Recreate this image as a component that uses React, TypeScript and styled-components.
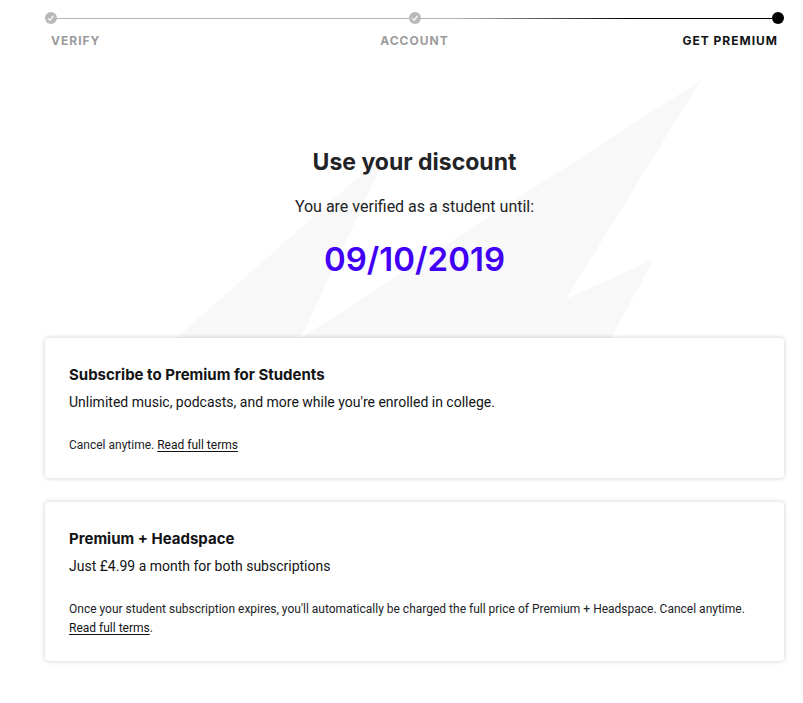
import React from 'react';
import styled, { createGlobalStyle } from 'styled-components';

const headingFont = 'Inter, "Liberation Sans", sans-serif';

const GlobalStyle = createGlobalStyle`
  * { box-sizing: border-box; }
  body {
    margin: 0;
    background: #fff;
    color: #121314;
    font-family: Roboto, "Liberation Sans", sans-serif;
  }
`;

const Page = styled.main`
  padding: 12px 19px 40px 45px;
`;

const Steps = styled.ol`
  display: grid;
  grid-template-columns: auto 1fr auto 1fr auto;
  align-items: center;
  margin: 0;
  padding: 0;
  list-style: none;
`;

const Marker = styled.svg`
  display: block;
  width: 12px;
  height: 12px;
`;

const Track = styled.li<{ $active?: boolean }>`
  height: 1px;
  background: ${p => (p.$active
    ? 'linear-gradient(to right, #b3b3b3 10%, #000 60%)'
    : '#b3b3b3')};
`;

const Labels = styled.div`
  display: grid;
  grid-template-columns: 1fr 1fr 1fr;
  margin-top: 8px;
  padding: 0 6px;
`;

const Label = styled.span<{ $align: 'left' | 'center' | 'right'; $current?: boolean }>`
  color: ${p => (p.$current ? '#121314' : '#9b9b9b')};
  font-family: ${headingFont};
  font-size: 12px;
  font-weight: 700;
  line-height: 18px;
  letter-spacing: 1px;
  text-align: ${p => p.$align};
  text-transform: uppercase;
`;

const Hero = styled.section`
  position: relative;
  display: grid;
  justify-items: center;
  padding: 94px 0 55px;
  text-align: center;
`;

const Backdrop = styled.svg`
  position: absolute;
  inset: 0;
  z-index: -1;
  width: 100%;
  height: 100%;
`;

const Title = styled.h1`
  margin: 0;
  color: #222326;
  font-family: ${headingFont};
  font-size: 23px;
  font-weight: 700;
  line-height: 36px;
`;

const Lead = styled.p`
  margin: 15px 0 0;
  color: #222326;
  font-size: 16px;
  line-height: 24px;
`;

const Expiry = styled.time`
  margin-top: 16px;
  color: #4100f5;
  font-family: ${headingFont};
  font-size: 33px;
  font-weight: 600;
  line-height: 48px;
`;

const Plans = styled.div`
  display: grid;
  gap: 24px;
`;

const Card = styled.article`
  padding: 24px 24px 23px;
  border-radius: 4px;
  background: #fff;
  box-shadow: 0 0 5px rgba(0, 0, 0, 0.2);
`;

const CardTitle = styled.h2`
  margin: 0;
  font-family: ${headingFont};
  font-size: 15px;
  font-weight: 700;
  line-height: 26px;
`;

const CardText = styled.p`
  margin: 4px 0 24px;
  font-size: 14px;
  line-height: 20px;
`;

const Terms = styled.p`
  margin: 0;
  color: #222326;
  font-size: 12px;
  line-height: 19px;
`;

const TermsLink = styled.a`
  color: #121314;
  text-decoration: underline;
  text-underline-offset: 2px;
`;

const CheckIcon = () => (
  <Marker viewBox="0 0 12 12" role="img" aria-label="Completed">
    <circle cx="6" cy="6" r="6" fill="#b9b9b9" />
    <path d="M3.2 6.5 5.2 8.2 8.6 3.7" fill="none" stroke="#fff" strokeWidth="1.1" />
  </Marker>
);

const DotIcon = () => (
  <Marker viewBox="0 0 12 12" role="img" aria-label="Current step">
    <circle cx="6" cy="6" r="6" fill="#000" />
  </Marker>
);

export default function App() {
  return (
    <>
      <GlobalStyle />
      <Page>
        <Steps aria-label="Progress">
          <li><CheckIcon /></li>
          <Track aria-hidden="true" />
          <li><CheckIcon /></li>
          <Track $active aria-hidden="true" />
          <li aria-current="step"><DotIcon /></li>
        </Steps>
        <Labels>
          <Label $align="left">Verify</Label>
          <Label $align="center">Account</Label>
          <Label $align="right" $current>Get Premium</Label>
        </Labels>

        <Hero>
          <Backdrop viewBox="0 0 739 288" preserveAspectRatio="xMidYMax meet" aria-hidden="true">
            <path
              d="M131 288 343 101 256 288 656 30 521 249 609 209 566 288Z"
              fill="#f8f8f8"
            />
          </Backdrop>
          <Title>Use your discount</Title>
          <Lead>You are verified as a student until:</Lead>
          <Expiry dateTime="2019-10-09">09/10/2019</Expiry>
        </Hero>

        <Plans>
          <Card>
            <CardTitle>Subscribe to Premium for Students</CardTitle>
            <CardText>Unlimited music, podcasts, and more while you're enrolled in college.</CardText>
            <Terms>Cancel anytime. <TermsLink href="#terms">Read full terms</TermsLink></Terms>
          </Card>
          <Card>
            <CardTitle>Premium + Headspace</CardTitle>
            <CardText>Just £4.99 a month for both subscriptions</CardText>
            <Terms>
              Once your student subscription expires, you'll automatically be charged the full price of Premium + Headspace. Cancel anytime.{' '}
              <TermsLink href="#headspace-terms">Read full terms</TermsLink>.
            </Terms>
          </Card>
        </Plans>
      </Page>
    </>
  );
}
